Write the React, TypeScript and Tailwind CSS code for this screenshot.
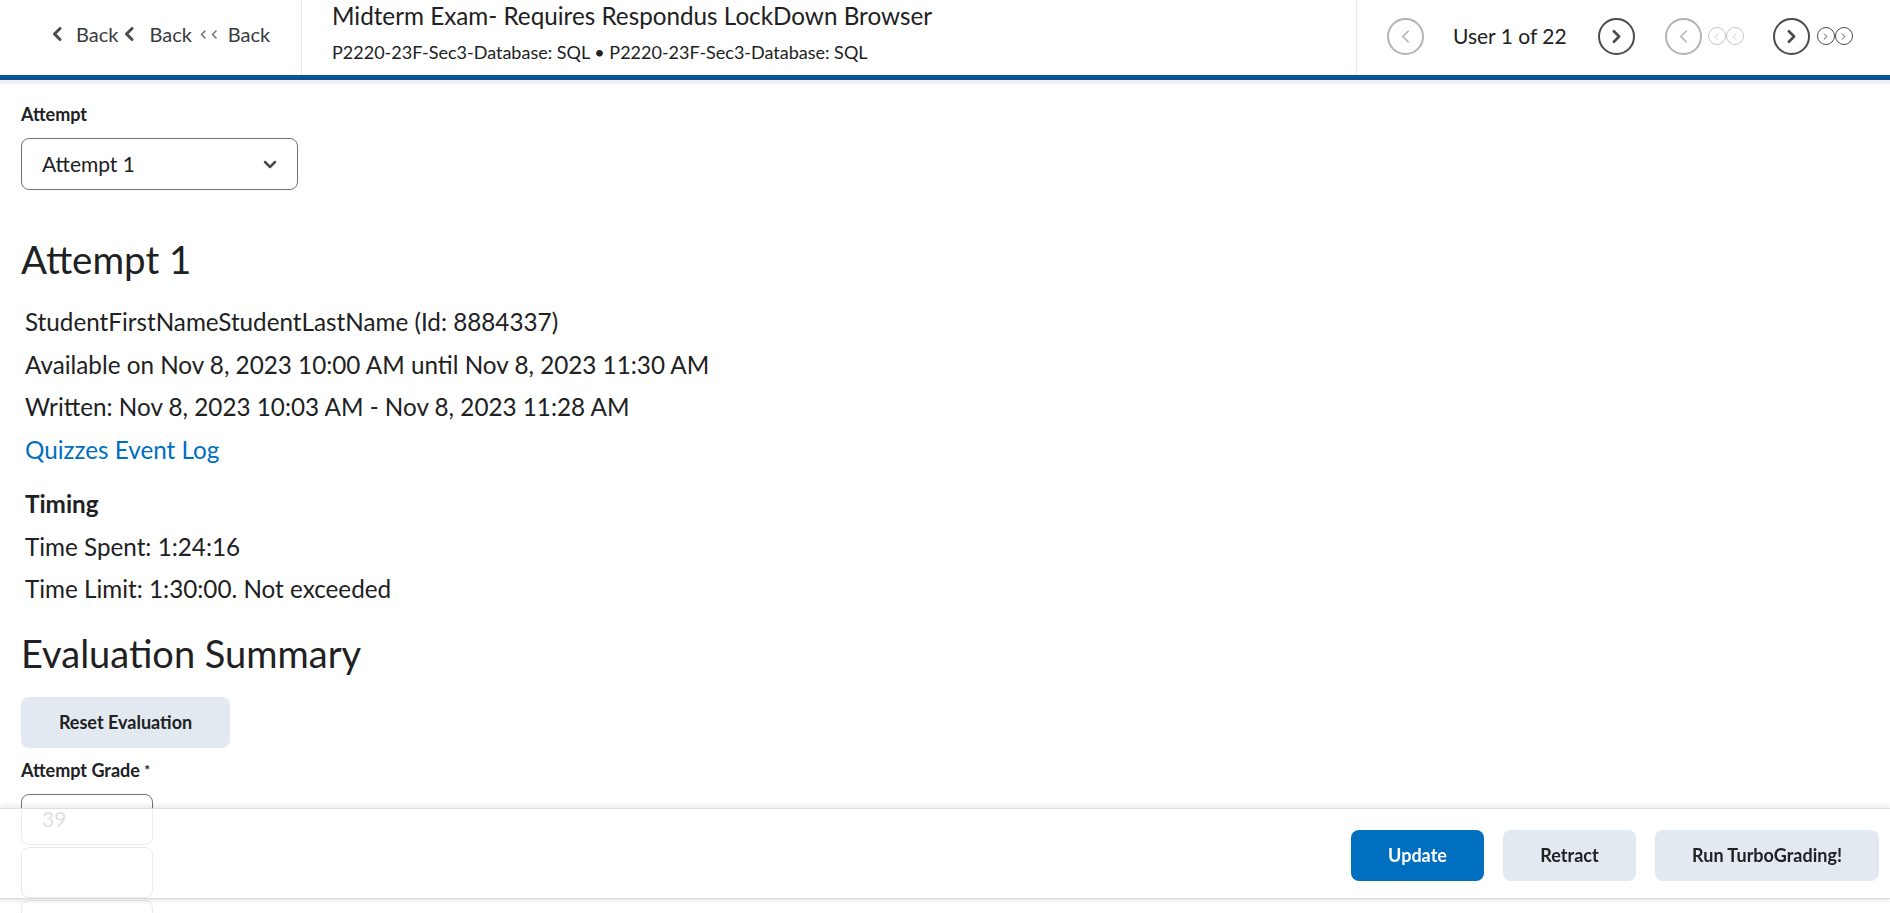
import { ChevronLeft, ChevronRight } from "lucide-react";

const font = { fontFamily: "Lato, 'Noto Sans', sans-serif" };

// ─── Small drawings ──────────────────────────────────────────────────────────

function BoldChevron() {
  return (
    <svg width="10" height="14" viewBox="0 0 10 14" className="shrink-0">
      <polyline points="8,1.5 2.5,7 8,12.5" fill="none" stroke="#494c4e" strokeWidth="3" strokeLinecap="round" strokeLinejoin="round" />
    </svg>
  );
}

function ThinChevron() {
  return (
    <svg width="6" height="9" viewBox="0 0 6 9" className="shrink-0">
      <polyline points="5,1 1.5,4.5 5,8" fill="none" stroke="#6e7376" strokeWidth="1.5" strokeLinecap="round" strokeLinejoin="round" />
    </svg>
  );
}

function CircleButton({ dir, dark }: { dir: "left" | "right"; dark?: boolean }) {
  const Icon = dir === "left" ? ChevronLeft : ChevronRight;
  return (
    <div
      className={`w-[37px] h-[37px] rounded-full border-2 flex items-center justify-center shrink-0 ${
        dark ? "border-[#494c4e] text-[#494c4e]" : "border-[#b1b3b5] text-[#b1b3b5]"
      }`}
    >
      <Icon size={21} strokeWidth={dark ? 3 : 2} />
    </div>
  );
}

function MiniPair({ dir, dark }: { dir: "left" | "right"; dark?: boolean }) {
  const Icon = dir === "left" ? ChevronLeft : ChevronRight;
  const cls = dark ? "border-[#494c4e] text-[#494c4e]" : "border-[#c3c5c7] text-[#c3c5c7]";
  return (
    <div className="flex items-center shrink-0">
      {[0, 1].map((i) => (
        <div key={i} className={`w-[18px] h-[18px] rounded-full border flex items-center justify-center ${cls}`}>
          <Icon size={11} strokeWidth={2} />
        </div>
      ))}
    </div>
  );
}

// ─── Header ──────────────────────────────────────────────────────────────────

function Header() {
  return (
    <div>
      <div className="h-[75px] flex bg-white">
        <div className="w-[302px] shrink-0 border-r border-[#e3e9f1] pl-[52px] pt-[22px]">
          <div className="flex items-center text-[20px] leading-[24px] text-[#393b3d]">
            <BoldChevron />
            <span className="ml-[14px]">Back</span>
            <span className="ml-[6px]"><BoldChevron /></span>
            <span className="ml-[15px]">Back</span>
            <span className="ml-[8px] flex gap-[5px] items-center"><ThinChevron /><ThinChevron /></span>
            <span className="ml-[11px]">Back</span>
          </div>
        </div>

        <div className="flex-1 pl-[30px] pt-[2px] text-[#202122]">
          <div className="text-[24.25px] leading-[28px]">Midterm Exam- Requires Respondus LockDown Browser</div>
          <div className="text-[18px] leading-[22px] mt-[11px]">
            P2220-23F-Sec3-Database: SQL • P2220-23F-Sec3-Database: SQL
          </div>
        </div>

        <div className="w-[534px] shrink-0 border-l border-[#e3e9f1] flex items-center pl-[30px] pb-[3px]">
          <CircleButton dir="left" />
          <span className="ml-[29px] text-[21px] leading-[24px] text-[#202122]">User 1 of 22</span>
          <span className="ml-[31px]"><CircleButton dir="right" dark /></span>
          <span className="ml-[30px]"><CircleButton dir="left" /></span>
          <span className="ml-[6px]"><MiniPair dir="left" /></span>
          <span className="ml-[29px]"><CircleButton dir="right" dark /></span>
          <span className="ml-[7px]"><MiniPair dir="right" dark /></span>
        </div>
      </div>
      <div className="h-[5px] bg-[#0c5291]" />
      <div className="h-[4px] bg-[#eff1f4]" />
    </div>
  );
}

// ─── Page ────────────────────────────────────────────────────────────────────

export default function App() {
  return (
    <div className="min-h-[913px] bg-white text-[#202122]" style={font}>
      <Header />

      <div className="pl-[21px] pb-[40px] flex flex-col items-start">
        <label className="mt-[20px] text-[18px] leading-[20px] font-bold">Attempt</label>
        <div className="mt-[14px] w-[277px] h-[52px] rounded-[8px] border border-[#6e7376] flex items-center justify-between pl-[20px] pr-[20px]">
          <span className="text-[21px]">Attempt 1</span>
          <svg width="14" height="9" viewBox="0 0 14 9">
            <polyline points="2,2 7,7 12,2" fill="none" stroke="#494c4e" strokeWidth="2.5" strokeLinecap="round" strokeLinejoin="round" />
          </svg>
        </div>

        <h1 className="mt-[47px] text-[38.5px] leading-[44px]">Attempt 1</h1>

        <div className="mt-[20px] pl-[4px] text-[24.25px] leading-[42.5px]">
          <div>StudentFirstNameStudentLastName (Id: 8884337)</div>
          <div>Available on Nov 8, 2023 10:00 AM until Nov 8, 2023 11:30 AM</div>
          <div>Written: Nov 8, 2023 10:03 AM - Nov 8, 2023 11:28 AM</div>
          <div className="text-[#006fbf]">Quizzes Event Log</div>
          <div className="mt-[12px] font-bold">Timing</div>
          <div>Time Spent: 1:24:16</div>
          <div>Time Limit: 1:30:00. Not exceeded</div>
        </div>

        <h2 className="mt-[20px] text-[38px] leading-[44px]">Evaluation Summary</h2>

        <button className="mt-[22px] w-[209px] h-[51px] rounded-[8px] bg-[#e3e9f1] text-[18px] font-bold">
          Reset Evaluation
        </button>

        <label className="mt-[12px] text-[18px] leading-[20px] font-bold">
          Attempt Grade <span className="text-[14px] align-top">*</span>
        </label>
        <div className="mt-[14px] flex flex-col gap-[2px]">
          <div className="w-[132px] h-[51px] rounded-[8px] border border-[#6e7376] flex items-center pl-[20px] text-[21px]">39</div>
          <div className="w-[132px] h-[51px] rounded-[8px] border border-[#6e7376]" />
          <div className="w-[132px] h-[51px] rounded-[8px] border border-[#6e7376]" />
        </div>
      </div>

      {/* Sticky footer, lies over the form */}
      <div className="fixed inset-x-0 bottom-0 h-[105px] bg-white/[0.85] border-t border-[#dcdee0] shadow-[0_-3px_4px_rgba(0,0,0,0.07)]">
        <div className="h-[90px] flex items-center justify-end gap-[19px] pr-[11px] pt-[3px] border-b border-[#d8dadc] shadow-[0_3px_3px_rgba(0,0,0,0.07)]">
          <button className="w-[133px] h-[51px] rounded-[8px] bg-[#006fbf] text-white text-[18px] font-bold">Update</button>
          <button className="w-[133px] h-[51px] rounded-[8px] bg-[#e3e9f1] text-[#202122] text-[18px] font-bold">Retract</button>
          <button className="w-[224px] h-[51px] rounded-[8px] bg-[#e3e9f1] text-[#202122] text-[18px] font-bold">Run TurboGrading!</button>
        </div>
      </div>
    </div>
  );
}
